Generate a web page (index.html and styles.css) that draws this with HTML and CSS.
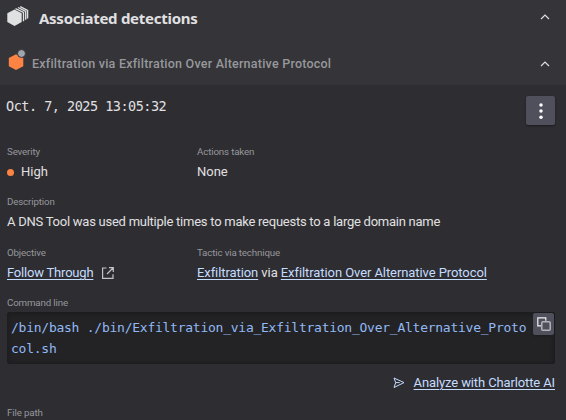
FILE: index.html
```html
<!DOCTYPE html>
<html lang="en">
<head>
<meta charset="utf-8">
<title>Associated detections</title>
<link rel="stylesheet" href="styles.css">
</head>
<body>
<main class="panel">
  <div class="headers">
    <header class="section-head">
      <svg class="stack-icon" width="22" height="22" viewBox="0 0 22 22"><path fill="#e0e1e3" d="M7.5 3.5 14.7 7.3v8.6L7.5 20 .3 15.9V7.3z"/><path fill="none" stroke="#e0e1e3" stroke-width="1.35" d="M8.5 2.6 16.5 6.5v8.8M11 1.5 18.7 5.3v8.4M13.2.6 20.6 4.3v8.2"/></svg>
      <h1 class="title">Associated detections</h1>
      <svg class="chevron" width="10" height="6" viewBox="0 0 10 6"><path d="M1 5 5 1.1 9 5"/></svg>
    </header>
    <header class="detection-head">
      <svg class="hex-icon" width="18" height="22" viewBox="0 0 18 22"><path fill="#fb8344" d="M8 5.3 15.3 9v8.3L8 21 .8 17.3V9z"/><circle cx="13.5" cy="4.5" r="4" fill="#9fa6ad" stroke="#353438"/></svg>
      <h2 class="subtitle">Exfiltration via Exfiltration Over Alternative Protocol</h2>
      <svg class="chevron" width="10" height="6" viewBox="0 0 10 6"><path d="M1 5 5 1.1 9 5"/></svg>
    </header>
  </div>
  <div class="details">
    <div class="date-row">
      <time class="date">Oct. 7, 2025 13:05:32</time>
      <button class="menu" aria-label="More"><svg width="4" height="16" viewBox="0 0 4 16" fill="#fff"><circle cx="2" cy="2" r="1.75"/><circle cx="2" cy="8" r="1.75"/><circle cx="2" cy="14.2" r="1.75"/></svg></button>
    </div>
    <div class="fields">
      <div class="field"><div class="label">Severity</div><div class="value"><i class="dot"></i>High</div></div>
      <div class="field"><div class="label">Actions taken</div><div class="value">None</div></div>
      <div class="field wide"><div class="label">Description</div><div class="value description">A DNS Tool was used multiple times to make requests to a large domain name</div></div>
      <div class="field"><div class="label">Objective</div><div class="value"><a class="objective">Follow Through</a><svg class="external" width="12" height="12" viewBox="0 0 12 12"><path d="M4.5 1H.6v10.4H11V7.3M7 .7h4.3V5M11 1 5 7"/></svg></div></div>
      <div class="field"><div class="label">Tactic via technique</div><div class="value tactic"><span><a>Exfiltration</a> via <a>Exfiltration Over Alternative Protocol</a></span></div></div>
    </div>
    <div class="label command-label">Command line</div>
    <div class="command"><code>/bin/bash ./bin/Exfiltration_via_Exfiltration_Over_Alternative_Protocol.sh</code>
      <button class="copy" aria-label="Copy"><svg width="14" height="14" viewBox="0 0 14 14" fill="none"><path stroke="#f0f0f3" stroke-width="1.2" d="M4 8.8H.8V.8h8v3"/><rect x="4.8" y="4.8" width="8.4" height="8.4" rx="1" stroke="#b4b4b8" stroke-width="1.5"/></svg></button>
    </div>
    <div class="analyze"><svg width="12" height="12" viewBox="0 0 12 12"><path d="M1 1 11 5.6 1 10.5 2.7 5.6zM2.7 5.6h4"/></svg><a>Analyze with Charlotte AI</a></div>
    <div class="label path-label">File path</div>
  </div>
</main>
</body>
</html>
```
FILE: styles.css
```css
* { box-sizing: border-box; }
body { margin: 0; background: #2e2d31; color: #e0e0e2; font: 13px/18px Roboto, "Liberation Sans", sans-serif; }
.panel { height: 420px; overflow: hidden; }
.headers { height: 85px; background: #353438; }
.section-head, .detection-head { display: flex; align-items: center; padding: 0 16px 0 7px; }
.section-head { height: 34px; }
.detection-head { height: 51px; }
.title { margin: 1px 0 0 10px; font: bold 15px/20px "Noto Sans", sans-serif; letter-spacing: -.27px; }
.hex-icon { margin: 0 0 0 1px; }
.subtitle { margin: 8px 0 0 6px; font: 500 12.5px/18px Roboto, sans-serif; color: #97989c; letter-spacing: .23px; }
.chevron { margin-left: auto; }
.detection-head .chevron { margin-top: 8px; }
.chevron path { fill: none; stroke: #e0e0e2; stroke-width: 1.2; }
.details { padding: 11px 11px 0 7px; }
.date-row { display: flex; justify-content: space-between; height: 50px; }
.date { margin-left: -1px; font: 13.5px/21px "DejaVu Sans Mono", monospace; letter-spacing: -.5px; }
button { display: flex; align-items: center; justify-content: center; padding: 0; border: 0; border-radius: 2px; background: #504f5c; box-shadow: 0 1px 2px #1d1c20; }
.menu { width: 29px; height: 29px; }
.fields { display: grid; grid-template-columns: 190px 1fr; grid-template-rows: 50px 51px 50px; }
.wide { grid-column: span 2; }
.label { font-size: 9.75px; line-height: 12px; color: #96989d; letter-spacing: -.16px; }
.value { display: flex; align-items: center; height: 18px; margin-top: 5px; white-space: nowrap; }
.description { letter-spacing: -.25px; }
.objective { letter-spacing: -.2px; }
.tactic { letter-spacing: -.08px; }
.dot { width: 7px; height: 7px; margin-right: 7px; border-radius: 50%; background: #fb8344; }
a { color: #c4dcff; text-decoration: underline; text-underline-offset: 2px; text-decoration-thickness: 1px; }
.external { margin-left: 9px; }
.external path { fill: none; stroke: #c4c4c7; stroke-width: 1.2; }
.command { position: relative; height: 52px; margin-top: 3px; padding: 4px 3px; border: 1px solid #1d1c1e; border-radius: 2px; background: #232325; box-shadow: inset 0 1px 4px #1b1b1d; }
.command code { display: block; width: 521px; font: 13px/21px "DejaVu Sans Mono", monospace; letter-spacing: -.25px; color: #92b9f4; word-break: break-all; }
.copy { position: absolute; top: 0; right: 0; width: 21px; height: 22px; }
.analyze { display: flex; align-items: center; justify-content: flex-end; gap: 9px; height: 18px; margin-top: 10px; letter-spacing: -.12px; }
.analyze path { fill: none; stroke: #c4dcff; stroke-width: 1; }
.path-label { margin-top: 15px; }
```
